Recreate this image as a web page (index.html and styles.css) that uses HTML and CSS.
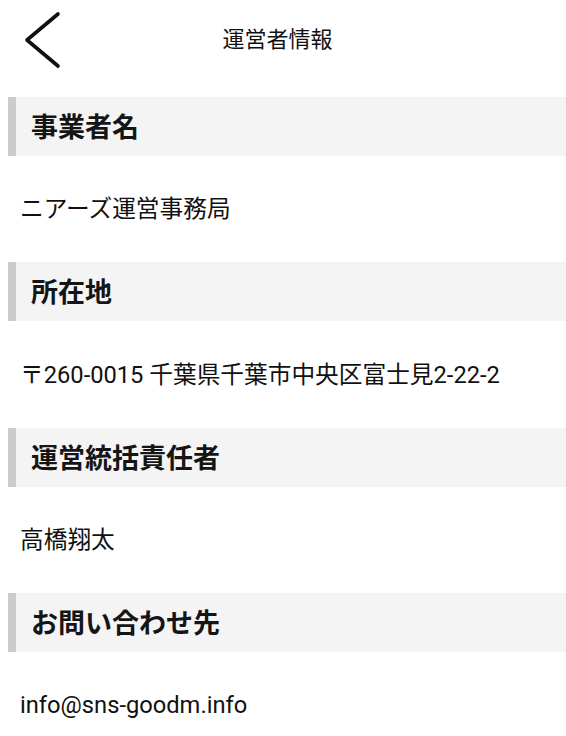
FILE: index.html
```html
<!DOCTYPE html>
<html lang="ja">
<head>
<meta charset="utf-8">
<title>運営者情報</title>
<link rel="stylesheet" href="styles.css">
</head>
<body>
<header class="topbar">
  <a class="back" href="#" aria-label="戻る">
    <svg width="40" height="60" viewBox="0 0 40 60">
      <polyline points="35,13 4,39 35,65" transform="translate(0,-9)" fill="none" stroke="#111" stroke-width="3.6" stroke-linecap="round" stroke-linejoin="round"/>
    </svg>
  </a>
  <h1 class="title">運営者情報</h1>
  <span class="spacer"></span>
</header>
<main class="content">
  <section class="block">
    <h2 class="block-head">事業者名</h2>
    <p class="block-body">ニアーズ運営事務局</p>
  </section>
  <section class="block">
    <h2 class="block-head">所在地</h2>
    <p class="block-body">〒260-0015 千葉県千葉市中央区富士見2-22-2</p>
  </section>
  <section class="block">
    <h2 class="block-head">運営統括責任者</h2>
    <p class="block-body">高橋翔太</p>
  </section>
  <section class="block">
    <h2 class="block-head">お問い合わせ先</h2>
    <p class="block-body">info@sns-goodm.info</p>
  </section>
</main>
</body>
</html>
```
FILE: styles.css
```css
* { box-sizing: border-box; }
html, body { margin: 0; padding: 0; background: #fff; }
body {
  font-family: Roboto, "Noto Sans CJK JP", sans-serif;
  color: #111;
  width: 566px;
}
.topbar {
  height: 80px;
  display: grid;
  grid-template-columns: 72px 1fr 72px;
  align-items: center;
}
.back {
  display: flex;
  align-items: center;
  padding-left: 23px;
  height: 80px;
}
.back svg { display: block; }
.title {
  margin: 0 11px 0 0;
  text-align: center;
  font-size: 22px;
  font-weight: 400;
  line-height: 30px;
}
.content {
  margin-top: 17px;
  padding-left: 8px;
}
.block-head {
  margin: 0;
  height: 59px;
  background: #f4f4f4;
  border-left: 8px solid #cccccc;
  padding-left: 15px;
  padding-bottom: 2px;
  display: flex;
  align-items: center;
  font-size: 27px;
  font-weight: 700;
  color: #151515;
}
.block-body {
  margin: 0;
  height: 106.35px;
  display: flex;
  align-items: center;
  padding-left: 12px;
  font-size: 23.7px;
  line-height: 30px;
  color: #111;
}
```
